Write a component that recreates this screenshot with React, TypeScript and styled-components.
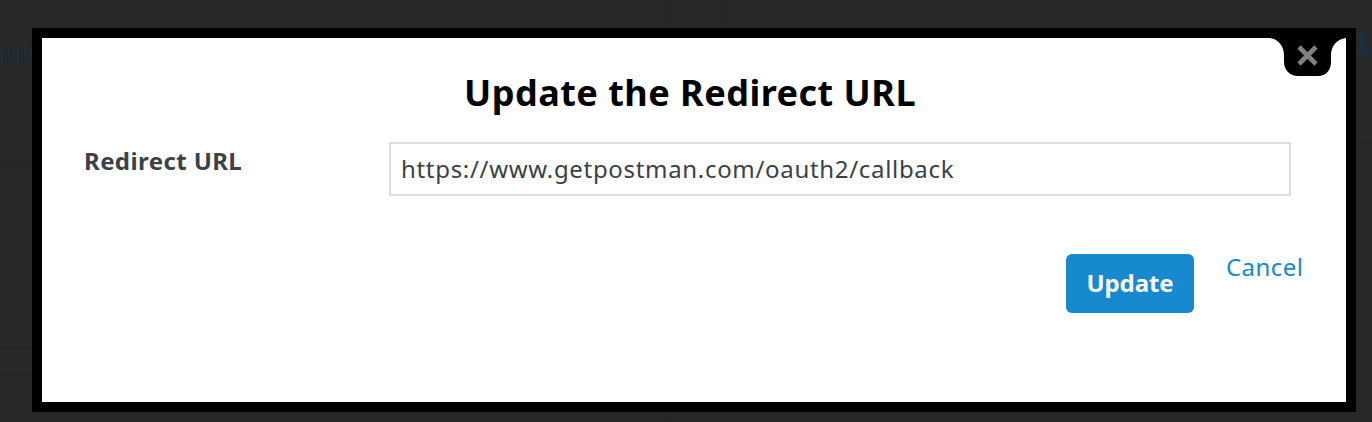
import React from "react";
import styled, { createGlobalStyle } from "styled-components";

const GlobalStyle = createGlobalStyle`
  *, *::before, *::after { box-sizing: border-box; }
  body {
    margin: 0;
    background: #282828;
    font-family: "Noto Sans", "Open Sans", sans-serif;
    color: #3b4148;
  }
`;

const Page = styled.div`
  position: relative;
  width: 1372px;
  height: 422px;
  overflow: hidden;
  background: #282828;
`;

const Backdrop = styled.div`
  display: flex;
  justify-content: space-between;
  height: 100%;
`;

const Column = styled.div<{ $side: "left" | "right" }>`
  display: flex;
  flex-direction: column;
  width: ${(p) => (p.$side === "left" ? 667 : 651)}px;
  height: ${(p) => (p.$side === "left" ? 422 : 400)}px;
  border: 0 solid #252525;
  border-right-width: ${(p) => (p.$side === "left" ? 2 : 0)}px;
  border-left-width: ${(p) => (p.$side === "right" ? 2 : 0)}px;
`;

const Row = styled.div<{ $height: number; $end?: boolean }>`
  display: flex;
  flex: none;
  justify-content: ${(p) => (p.$end ? "flex-end" : "flex-start")};
  height: ${(p) => p.$height}px;
  border-bottom: 2px solid #252525;
`;

const DimLink = styled.span<{ $bold?: boolean }>`
  padding-top: ${(p) => (p.$bold ? 27 : 36)}px;
  margin-left: ${(p) => (p.$bold ? 0 : -8)}px;
  margin-right: ${(p) => (p.$bold ? -10 : 0)}px;
  font-family: ${(p) => (p.$bold ? '"DejaVu Sans", sans-serif' : "inherit")};
  font-size: ${(p) => (p.$bold ? 31 : 25)}px;
  font-weight: ${(p) => (p.$bold ? 700 : 400)};
  line-height: 34px;
  letter-spacing: ${(p) => (p.$bold ? -2 : 0.4)}px;
  color: #192f3d;
`;

const Dialog = styled.section`
  position: absolute;
  top: 28px;
  left: 32px;
  width: 1324px;
  height: 384px;
  padding: 30px 41px 0 42px;
  border: 10px solid #000;
  background: #fff;
`;

const Title = styled.h1`
  margin: 0;
  padding-right: 9px;
  text-align: center;
  font-size: 36px;
  font-weight: 700;
  line-height: 50px;
  letter-spacing: 0.5px;
  color: #000;
`;

const Field = styled.div`
  display: flex;
  align-items: flex-start;
  margin-top: 24px;
`;

const Label = styled.label`
  width: 305px;
  font-size: 24px;
  font-weight: 700;
  line-height: 38px;
  letter-spacing: 0.4px;
`;

const Input = styled.input`
  width: 902px;
  height: 54px;
  padding: 0 10px 2px;
  border: 2px solid #dedede;
  border-radius: 0;
  outline: 0;
  background: #fff;
  color: #3b4148;
  font-family: inherit;
  font-size: 24px;
  letter-spacing: 0.68px;
`;

const Actions = styled.div`
  display: flex;
  justify-content: flex-end;
  align-items: flex-start;
  gap: 32px;
  margin-top: 58px;
  margin-right: -1px;
`;

const UpdateButton = styled.button`
  width: 128px;
  height: 59px;
  padding: 0 0 2px;
  border: 0;
  border-radius: 6px;
  background: #1789ce;
  color: #fff;
  font-family: inherit;
  font-size: 24px;
  font-weight: 700;
  letter-spacing: -0.1px;
`;

const CancelLink = styled.a`
  width: 89px;
  margin-right: -9px;
  font-size: 24px;
  line-height: 26px;
  letter-spacing: 0.45px;
  color: #1789ce;
`;

const CloseButton = styled.button`
  position: absolute;
  top: 0;
  right: 0;
  width: 76px;
  height: 38px;
  padding: 0;
  border: 0;
  background: none;
  svg { display: block; }
`;

export default function App() {
  return (
    <Page>
      <GlobalStyle />
      <Backdrop aria-hidden="true">
        <Column $side="left">
          <Row $height={139}><DimLink>ault</DimLink></Row>
          <Row $height={26} />
          <Row $height={185} />
          <Row $height={26} />
        </Column>
        <Column $side="right">
          <Row $height={144} $end><DimLink $bold>1-</DimLink></Row>
        </Column>
      </Backdrop>
      <Dialog role="dialog" aria-labelledby="dialog-title">
        <Title id="dialog-title">Update the Redirect URL</Title>
        <Field>
          <Label htmlFor="redirect-url">Redirect URL</Label>
          <Input id="redirect-url" defaultValue="https://www.getpostman.com/oauth2/callback" spellCheck={false} />
        </Field>
        <Actions>
          <UpdateButton>Update</UpdateButton>
          <CancelLink>Cancel</CancelLink>
        </Actions>
        <CloseButton aria-label="Close">
          <svg width="76" height="38" viewBox="0 0 76 38">
            <path d="M0 0C8 1 14 8 14 17V24C14 32 20 38 28 38H48C56 38 61 32 61 24V17C61 8 67 1 76 0Z" fill="#000" />
            <path d="M29 9L46 26M46 9L29 26" stroke="#808080" strokeWidth="4.6" />
          </svg>
        </CloseButton>
      </Dialog>
    </Page>
  );
}
